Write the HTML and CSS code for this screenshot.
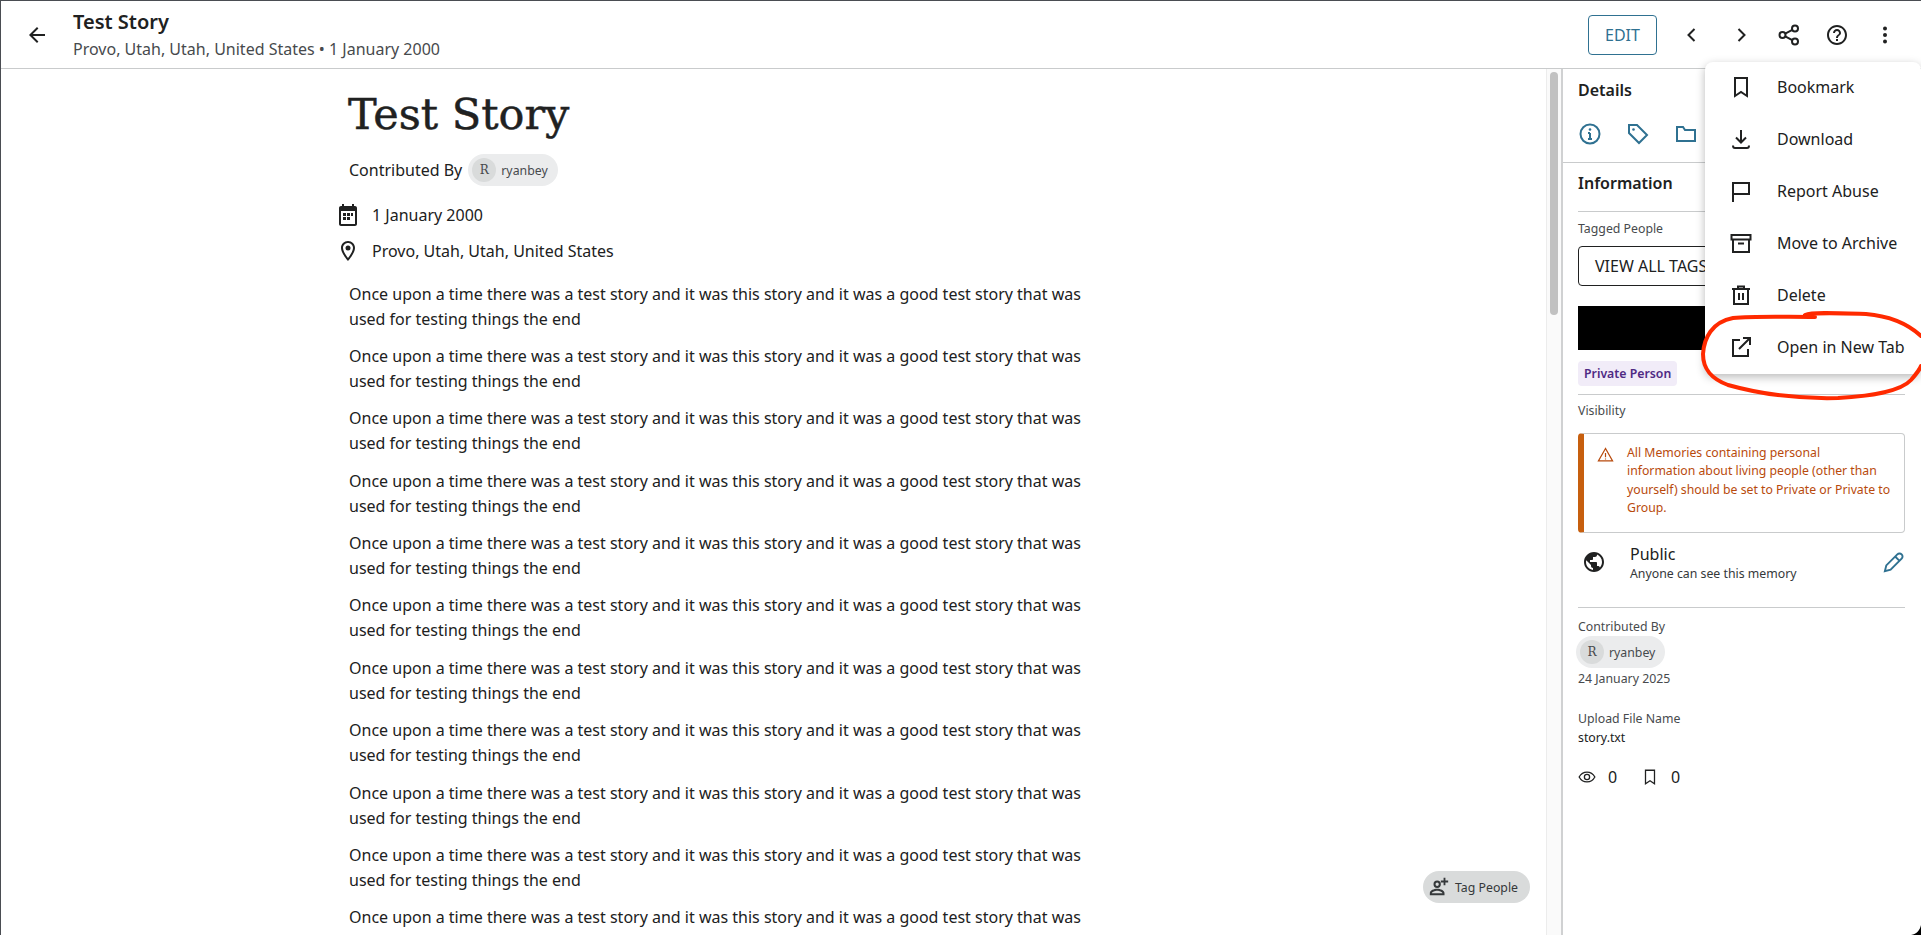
FILE: index.html
```html
<!DOCTYPE html>
<html lang="en">
<head>
    <meta charset="UTF-8">
    <title>Test Story</title>
    <link rel="stylesheet" href="styles.css">
</head>
<body>
    <header class="topbar">
        <button class="icon-btn back-btn">
            <svg viewBox="0 0 24 24"><path d="M20 11H7.83l5.59-5.59L12 4l-8 8 8 8 1.41-1.41L7.83 13H20v-2z"/></svg>
        </button>
        <div class="topbar-title">
            <div class="topbar-name">Test Story</div>
            <div class="topbar-sub">Provo, Utah, Utah, United States • 1 January 2000</div>
        </div>
        <div class="topbar-actions">
            <button class="edit-btn">EDIT</button>
            <button class="icon-btn prev-btn"><svg viewBox="0 0 24 24" class="line"><path d="M15.500 6l-6 6 6 6"/></svg></button>
            <button class="icon-btn"><svg viewBox="0 0 24 24" class="line"><path d="M9.500 6l6 6-6 6"/></svg></button>
            <button class="icon-btn"><svg viewBox="0 0 24 24" class="line"><circle cx="5.5" cy="12" r="3"/><circle cx="18" cy="5.5" r="3"/><circle cx="18" cy="18.5" r="3"/><path d="M8.2 10.6l7.1-3.7M8.2 13.4l7.1 3.7"/></svg></button>
            <button class="icon-btn"><svg viewBox="0 0 24 24"><path d="M11 18h2v-2h-2v2zm1-16C6.48 2 2 6.48 2 12s4.48 10 10 10 10-4.48 10-10S17.52 2 12 2zm0 18c-4.41 0-8-3.59-8-8s3.59-8 8-8 8 3.59 8 8-3.59 8-8 8zm0-14c-2.21 0-4 1.79-4 4h2c0-1.1.9-2 2-2s2 .9 2 2c0 2-3 1.75-3 5h2c0-2.25 3-2.5 3-5 0-2.21-1.79-4-4-4z"/></svg></button>
            <button class="icon-btn"><svg viewBox="0 0 24 24"><circle cx="12" cy="5.5" r="2"/><circle cx="12" cy="12" r="2"/><circle cx="12" cy="18.5" r="2"/></svg></button>
        </div>
    </header>

    <div class="main">
        <main class="story">
            <h1 class="story-title">Test Story</h1>
            <div class="contributed">
                <span>Contributed By</span>
                <span class="user-chip"><span class="avatar">R</span>ryanbey</span>
            </div>
            <div class="meta-row">
                <svg viewBox="0 0 24 24"><path d="M19 3h-1V1h-2v2H8V1H6v2H5C3.9 3 3 3.9 3 5v16c0 1.1.9 2 2 2h14c1.1 0 2-.9 2-2V5c0-1.100-.9-2-2-2zm0 18H5V8h14v13zM7 10h3v3H7zm4 0h3v3h-3zm4 0h2v3h-2zm-8 4h3v3H7zm4 0h3v3h-3z"/></svg>
                <span>1 January 2000</span>
            </div>
            <div class="meta-row">
                <svg viewBox="0 0 24 24"><path d="M12 2C8.13 2 5 5.130 5 9c0 5.250 7 13 7 13s7-7.750 7-13c0-3.870-3.130-7-7-7zm0 17c-1.900-2.500-5-7-5-10 0-2.760 2.240-5 5-5s5 2.240 5 5c0 3-3.100 7.500-5 10z"/><circle cx="12" cy="9" r="2.500"/></svg>
                <span>Provo, Utah, Utah, United States</span>
            </div>
            <p>Once upon a time there was a test story and it was this story and it was a good test story that was used for testing things the end</p>
            <p>Once upon a time there was a test story and it was this story and it was a good test story that was used for testing things the end</p>
            <p>Once upon a time there was a test story and it was this story and it was a good test story that was used for testing things the end</p>
            <p>Once upon a time there was a test story and it was this story and it was a good test story that was used for testing things the end</p>
            <p>Once upon a time there was a test story and it was this story and it was a good test story that was used for testing things the end</p>
            <p>Once upon a time there was a test story and it was this story and it was a good test story that was used for testing things the end</p>
            <p>Once upon a time there was a test story and it was this story and it was a good test story that was used for testing things the end</p>
            <p>Once upon a time there was a test story and it was this story and it was a good test story that was used for testing things the end</p>
            <p>Once upon a time there was a test story and it was this story and it was a good test story that was used for testing things the end</p>
            <p>Once upon a time there was a test story and it was this story and it was a good test story that was used for testing things the end</p>
            <p>Once upon a time there was a test story and it was this story and it was a good test story that was used for testing things the end</p>
        </main>

        <div class="scrollbar"><div class="scroll-thumb"></div></div>

        <aside class="panel">
            <div class="panel-head">
                <div class="panel-heading">Details</div>
                <div class="panel-tabs">
                    <svg viewBox="0 0 24 24" class="line"><circle cx="12" cy="12" r="9.500"/><path d="M12 11v6M10 17h4M10 11h2"/><circle cx="12" cy="7.500" r="1.300" class="dot"/></svg>
                    <svg viewBox="0 0 24 24" class="line"><path d="M3 3h8l10 10-8 8L3 11z"/><circle cx="7.500" cy="7.500" r="1.300" class="dot"/></svg>
                    <svg viewBox="0 0 24 24" class="line"><path d="M3 5h6l2 3h10v11H3z"/></svg>
                </div>
            </div>
            <div class="panel-body">
                <div class="panel-heading">Information</div>
                <hr class="rule">
                <div class="label tagged-label">Tagged People</div>
                <button class="tags-btn">VIEW ALL TAGS</button>
                <div class="redacted"></div>
                <span class="private-chip">Private Person</span>
                <hr class="rule rule-visibility">
                <div class="label">Visibility</div>
                <div class="alert">
                    <svg viewBox="0 0 24 24" class="line"><path d="M12 3.500L2 21h20z"/><path d="M12 10v6M12 17.500v1.500"/></svg>
                    <div>All Memories containing personal<br>information about living people (other than<br>yourself) should be set to Private or Private to<br>Group.</div>
                </div>
                <div class="visibility">
                    <svg viewBox="0 0 24 24"><path d="M12 2C6.480 2 2 6.480 2 12s4.480 10 10 10 10-4.480 10-10S17.520 2 12 2zm-1 17.930c-3.950-.49-7-3.850-7-7.930 0-.62.08-1.210.21-1.790L9 15v1c0 1.100.9 2 2 2v1.930zm6.900-2.540c-.26-.81-1-1.390-1.900-1.390h-1v-3c0-.55-.45-1-1-1H8v-2h2c.55 0 1-.45 1-1V7h2c1.100 0 2-.9 2-2v-.41c2.930 1.190 5 4.060 5 7.410 0 2.080-.8 3.970-2.100 5.390z"/></svg>
                    <div class="visibility-text">
                        <div class="visibility-name">Public</div>
                        <div class="visibility-desc">Anyone can see this memory</div>
                    </div>
                    <svg viewBox="0 0 24 24" class="line pencil"><path d="M3 21l1.500-6L16 3.500a2.500 2.500 0 0 1 4.500 4.500L9 19.500zM14 6l4 4"/></svg>
                </div>
                <hr class="rule">
                <div class="label contributed-label">Contributed By</div>
                <span class="user-chip side-chip"><span class="avatar">R</span>ryanbey</span>
                <div class="small-text date-text">24 January 2025</div>
                <div class="label upload-label">Upload File Name</div>
                <div class="small-text file-name">story.txt</div>
                <div class="counts">
                    <svg viewBox="0 0 24 24" class="line"><path d="M1.500 12C4 7.500 8 5.500 12 5.500s8 2 10.500 6.500C20 16.500 16 18.500 12 18.500S4 16.500 1.500 12z"/><circle cx="12" cy="12" r="3.500"/></svg>
                    <span class="count">0</span>
                    <svg viewBox="0 0 24 24" class="line"><path d="M6 3h12v18l-6-4-6 4z"/></svg>
                    <span class="count">0</span>
                </div>
            </div>
        </aside>
    </div>

    <button class="tag-people">
        <svg viewBox="0 0 24 24"><path d="M10 5a4 4 0 1 0 0 8 4 4 0 0 0 0-8zm0 2.200a1.800 1.800 0 1 1 0 3.600 1.800 1.800 0 0 1 0-3.600zM10 14c-3.500 0-8 1.700-8 4.500V21h16v-2.500C18 15.700 13.500 14 10 14zm-5.800 4.800c.2-1 3.300-2.600 5.800-2.600s5.600 1.600 5.800 2.600zM19 2v3h3v2h-3v3h-2V7h-3V5h3V2z"/></svg>
        Tag People
    </button>

    <div class="menu">
        <div class="menu-item">
            <svg viewBox="0 0 24 24" class="line"><path d="M6 3h12v18l-6-4-6 4z"/></svg>
            Bookmark
        </div>
        <div class="menu-item">
            <svg viewBox="0 0 24 24" class="line"><path d="M12 3v12.500M7 10.500l5 5 5-5M4 18.500c0 1.500.5 2.500 2 2.500h12c1.500 0 2-1 2-2.500"/></svg>
            Download
        </div>
        <div class="menu-item">
            <svg viewBox="0 0 24 24" class="line"><path d="M4 23V4h16v11H4"/></svg>
            Report Abuse
        </div>
        <div class="menu-item">
            <svg viewBox="0 0 24 24" class="line"><path d="M2.500 4h19v4.500h-19zM4 8.500V21h16V8.500M9 12.500h6"/></svg>
            Move to Archive
        </div>
        <div class="menu-item">
            <svg viewBox="0 0 24 24" class="line"><path d="M3 6h18M9 6V3.500h6V6M5 6v15h14V6M10 10v7M14 10v7"/></svg>
            Delete
        </div>
        <div class="menu-item">
            <svg viewBox="0 0 24 24" class="line"><path d="M11 5H4v16h15v-7M21 3l-11 11M14 3h7v7"/></svg>
            Open in New Tab
        </div>
    </div>

    <!-- red marker scribble from the screenshot, plus the window corner -->
    <svg class="scribble" viewBox="0 0 1921 935">
        <path class="scribble-line" d="M1815 317C1780 317 1755 316 1733 318C1712 322 1704 338 1703 354C1703 370 1712 379 1728 385C1760 394 1800 399 1838 398C1870 396 1900 392 1911 380C1918 372 1920 369 1921 366M1805 315C1812 312 1835 313 1866 314C1890 316 1908 324 1921 336"/>
        <path d="M1921 925V935H1911C1917 934 1920 930 1921 925Z"/>
    </svg>
</body>
</html>
```

FILE: styles.css
```css
* {
    box-sizing: border-box;
}

html, body {
    height: 100%;
}

body {
    margin: 0;
    overflow: hidden;
    position: relative;
    display: flex;
    flex-direction: column;
    font-family: "Noto Sans", sans-serif;
    font-size: 16px;
    color: #202121;
    background: #fff;
    border-top: 1px solid #4a4d52;
    border-left: 1px solid #4a4d52;
}

button {
    font-family: inherit;
    cursor: pointer;
}

svg {
    fill: currentColor;
    flex: none;
}

svg.line {
    fill: none;
    stroke: currentColor;
    stroke-width: 2;
}

svg.line .dot {
    fill: currentColor;
    stroke: none;
}

/* top bar */
.topbar {
    display: flex;
    align-items: center;
    flex: none;
    height: 68px;
    border-bottom: 1px solid #c9cbcc;
}

.icon-btn {
    display: flex;
    align-items: center;
    justify-content: center;
    width: 48px;
    height: 48px;
    padding: 0;
    border: none;
    background: none;
    color: #202121;
}

.icon-btn svg {
    width: 24px;
    height: 24px;
}

.back-btn {
    margin-left: 12px;
    margin-right: 12px;
}

.prev-btn {
    margin-right: 2px;
}

.topbar-title {
    flex: 1;
    padding-bottom: 2px;
}

.topbar-name {
    font-size: 20px;
    font-weight: 600;
    line-height: 27px;
    margin-bottom: 3px;
}

.topbar-sub {
    font-size: 16px;
    line-height: 22px;
    color: #474a4d;
}

.topbar-actions {
    display: flex;
    align-items: center;
    padding-right: 12px;
}

.edit-btn {
    width: 69px;
    height: 40px;
    margin-right: 10px;
    border: 1px solid #2f7191;
    border-radius: 4px;
    background: #fff;
    color: #2f7191;
    font-size: 16px;
}

/* page area */
.main {
    flex: 1;
    display: flex;
    min-height: 0;
}

.story {
    flex: 1;
    overflow: hidden;
    padding-left: 348px;
}

.story-title {
    margin: 18px 0 0 -1px;
    font-family: "DejaVu Serif", serif;
    font-size: 43px;
    font-weight: 400;
    line-height: 54px;
    -webkit-text-stroke: 0.5px #202121;
}

.contributed {
    display: flex;
    align-items: center;
    gap: 6px;
    margin-top: 13px;
    height: 32px;
}

.user-chip {
    display: inline-flex;
    align-items: center;
    height: 32px;
    padding: 0 10px 0 4px;
    border-radius: 16px;
    background: #ebeced;
    font-size: 12.300px;
    color: #474a4d;
}

.avatar {
    display: flex;
    align-items: center;
    justify-content: center;
    width: 24px;
    height: 24px;
    margin-right: 5px;
    border-radius: 50%;
    background: #d9dbdb;
    font-family: "DejaVu Serif", serif;
    font-size: 12px;
}

.meta-row {
    display: flex;
    align-items: center;
    gap: 12px;
    height: 36px;
    margin-left: -13px;
}

.contributed + .meta-row {
    margin-top: 11px;
}

.meta-row svg {
    width: 24px;
    height: 24px;
}

.story p {
    width: 735px;
    margin: 0 0 12.400px;
    line-height: 25px;
}

.meta-row + p {
    margin-top: 12.500px;
}

/* scrollbar */
.scrollbar {
    flex: none;
    width: 15px;
    padding: 3px 3px 0;
    background: #fafafa;
    border-left: 1px solid #ececec;
}

.scroll-thumb {
    width: 8px;
    height: 243px;
    border-radius: 4px;
    background: #c1c1c1;
}

/* details panel */
.panel {
    flex: none;
    width: 360px;
    border-left: 2px solid #d0d1d2;
}

.panel-head {
    height: 94px;
    padding: 9px 16px 0 15px;
    border-bottom: 1px solid #c9cbcc;
}

.panel-heading {
    font-size: 16px;
    font-weight: 600;
    line-height: 24px;
}

.panel-tabs {
    display: flex;
    gap: 24px;
    margin-top: 20px;
    color: #2f7191;
}

.panel-tabs svg {
    width: 24px;
    height: 24px;
}

.panel-body {
    padding: 8px 16px 0 15px;
}

.rule {
    margin: 16px 0 7px;
    border: none;
    border-top: 1px solid #c9cbcc;
}

.label {
    font-size: 12.300px;
    line-height: 18px;
    color: #474a4d;
}

.tagged-label {
    margin-top: 8px;
}

.tags-btn {
    display: block;
    width: 327px;
    height: 40px;
    margin-top: 8px;
    padding: 0 16px;
    text-align: left;
    border: 1px solid #202121;
    border-radius: 4px;
    background: #fff;
    color: #202121;
    font-size: 16px;
}

.redacted {
    width: 327px;
    height: 44px;
    margin-top: 20px;
    background: #000;
}

.private-chip {
    display: block;
    width: fit-content;
    height: 25px;
    margin-top: 11px;
    padding: 0 6px;
    border-radius: 4px;
    background: #f1ecf8;
    color: #4f2a84;
    font-size: 12.300px;
    font-weight: 600;
    line-height: 25px;
}

.rule-visibility {
    margin-top: 8px;
}

.alert {
    display: flex;
    gap: 13px;
    width: 327px;
    height: 100px;
    margin-top: 13px;
    padding: 10px 8px 0 13px;
    border: 1px solid #c9cbcc;
    border-left: 6px solid #c75f0e;
    border-radius: 4px;
    color: #b84a0c;
    font-size: 12.250px;
    line-height: 18.300px;
    white-space: nowrap;
}

.alert svg {
    width: 17px;
    height: 17px;
    margin-top: 2px;
    stroke-width: 1.700;
}

.visibility {
    display: flex;
    align-items: center;
    gap: 24px;
    margin-top: 9px;
    padding-left: 4px;
}

.visibility > svg:first-child {
    width: 24px;
    height: 24px;
}

.visibility-text {
    flex: 1;
}

.visibility-name {
    font-size: 16px;
    line-height: 24px;
}

.visibility-desc {
    font-size: 12.300px;
    line-height: 16px;
    color: #35383a;
}

.pencil {
    width: 23px;
    height: 23px;
    color: #2f7191;
}

.visibility + .rule {
    margin: 25px 0 0;
}

.contributed-label {
    margin-top: 10px;
}

.side-chip {
    display: flex;
    width: fit-content;
    margin-left: -2px;
}

.small-text {
    font-size: 12.300px;
    line-height: 18px;
}

.date-text {
    margin-top: 2px;
    color: #474a4d;
}

.upload-label {
    margin-top: 22px;
}

.file-name {
    margin-top: 1px;
}

.counts {
    display: flex;
    align-items: center;
    gap: 12px;
    margin-top: 19px;
}

.counts svg {
    width: 18px;
    height: 18px;
    stroke-width: 1.700;
}

.count {
    width: 21px;
    font-size: 16px;
}

/* things on top of the page */
.tag-people {
    position: absolute;
    left: 1422px;
    top: 870px;
    display: flex;
    align-items: center;
    gap: 5px;
    width: 107px;
    height: 32px;
    padding: 0 0 0 5px;
    border: none;
    border-radius: 16px;
    background: #d9dbdb;
    color: #35383a;
    font-size: 12.300px;
}

.tag-people svg {
    width: 22px;
    height: 22px;
}

.menu {
    position: absolute;
    left: 1704px;
    top: 61px;
    width: 216px;
    border-radius: 8px;
    background: #fff;
    box-shadow: 0 3px 10px rgba(0, 0, 0, 0.28);
}

.menu-item {
    display: flex;
    align-items: center;
    gap: 24px;
    height: 52px;
    padding: 0 0 2px 24px;
    white-space: nowrap;
}

.menu-item svg {
    width: 24px;
    height: 24px;
}

.scribble {
    position: absolute;
    left: -1px;
    top: -1px;
    width: 1921px;
    height: 935px;
    pointer-events: none;
}

.scribble path {
    fill: #000;
}

.scribble .scribble-line {
    fill: none;
    stroke: #ff2a00;
    stroke-width: 4;
    stroke-linecap: round;
}
```
